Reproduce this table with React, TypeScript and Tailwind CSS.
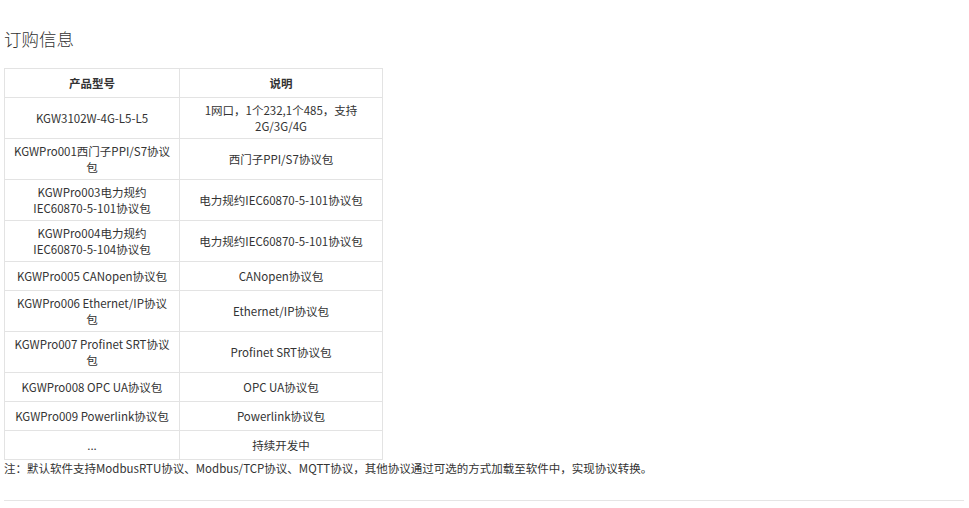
const rows: [string, string][] = [
  ["KGW3102W-4G-L5-L5", "1网口，1个232,1个485，支持\n2G/3G/4G"],
  ["KGWPro001西门子PPI/S7协议\n包", "西门子PPI/S7协议包"],
  ["KGWPro003电力规约\nIEC60870-5-101协议包", "电力规约IEC60870-5-101协议包"],
  ["KGWPro004电力规约\nIEC60870-5-104协议包", "电力规约IEC60870-5-101协议包"],
  ["KGWPro005 CANopen协议包", "CANopen协议包"],
  ["KGWPro006 Ethernet/IP协议\n包", "Ethernet/IP协议包"],
  ["KGWPro007 Profinet SRT协议\n包", "Profinet SRT协议包"],
  ["KGWPro008 OPC UA协议包", "OPC UA协议包"],
  ["KGWPro009 Powerlink协议包", "Powerlink协议包"],
  ["...", "持续开发中"],
];

export default function App() {
  return (
    <div className="min-h-screen bg-white px-1 text-[#333] font-['Noto_Sans_CJK_SC',sans-serif]">
      <h2 className="pt-[26px] text-[17.5px] leading-[26px] font-light text-[#333]">订购信息</h2>

      <table className="mt-[16px] w-[378px] table-fixed border-collapse text-[11.5px] leading-[16px]">
        <colgroup>
          <col className="w-[175px]" />
          <col className="w-[203px]" />
        </colgroup>
        <thead>
          <tr>
            <th className="h-[29px] border border-[#e3e3e3] px-[6px] font-bold">产品型号</th>
            <th className="h-[29px] border border-[#e3e3e3] px-[6px] font-bold">说明</th>
          </tr>
        </thead>
        <tbody>
          {rows.map(([model, desc], i) => (
            <tr key={i}>
              <td className="h-[29px] whitespace-pre-line border border-[#e3e3e3] px-[6px] py-1 text-center">{model}</td>
              <td className="h-[29px] whitespace-pre-line border border-[#e3e3e3] px-[6px] py-1 text-center">{desc}</td>
            </tr>
          ))}
        </tbody>
      </table>

      <p className="text-[11.5px] leading-[16px]">
        注：默认软件支持ModbusRTU协议、Modbus/TCP协议、MQTT协议，其他协议通过可选的方式加载至软件中，实现协议转换。
      </p>

      <div className="mt-[24px] w-[960px] border-t border-[#e5e5e5]" />
    </div>
  );
}
